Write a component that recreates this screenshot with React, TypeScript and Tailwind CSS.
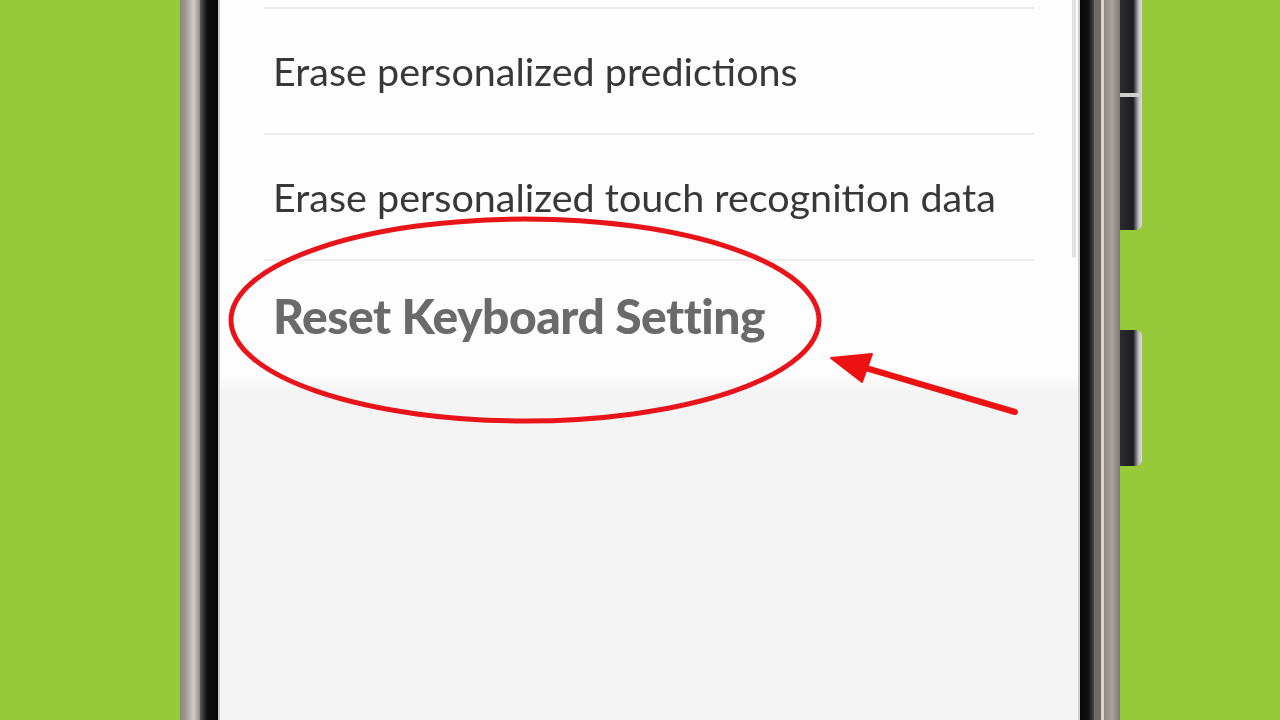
export default function App() {
  const rows = ["Erase personalized predictions", "Erase personalized touch recognition data"];

  return (
    <div className="w-[1280px] h-[720px] overflow-hidden flex bg-[#96ca3a]" style={{ fontFamily: "Lato, 'Noto Sans', sans-serif" }}>
      {/* green margin left */}
      <div className="w-[180px] shrink-0" />

      {/* left frame */}
      <div className="w-[40px] shrink-0 flex">
        <div className="w-[20px] bg-[linear-gradient(to_right,#8a8580,#a29c97_30%,#d2cdc8_70%,#8f8984)]" />
        <div className="w-[18px] bg-[linear-gradient(to_right,#5a5a5a,#0c0c0c_40%,#050505)]" />
        <div className="w-[2px] bg-[#c8c8c8]" />
      </div>

      {/* screen */}
      <div className="relative w-[858px] shrink-0 flex flex-col bg-[#f4f4f4]">
        <div className="bg-[#fdfdfd] pt-[7px] px-[44px] pb-[4px]">
          {rows.map((r) => (
            <div key={r}>
              <div className="h-[2px] bg-[#ebebeb]" />
              <div className="h-[124px] flex items-center pl-[9px] text-[39.5px] text-[#383838] blur-[0.5px]">{r}</div>
            </div>
          ))}
          <div className="h-[2px] bg-[#ededed]" />
          <div className="h-[110px] flex items-center pl-[9px] text-[48px] font-black text-[#6a6a6a] tracking-[-0.5px] blur-[0.3px]">
            Reset Keyboard Setting
          </div>
        </div>
        <div className="h-[16px] bg-[linear-gradient(to_bottom,#fdfdfd,#f4f4f4)]" />
        <div className="flex-1" />

        {/* scrollbar */}
        <div className="absolute right-[2px] top-0 w-[4px] h-[258px] rounded-b-full bg-[#e2e2e2]" />

        {/* annotation */}
        <svg className="absolute left-0 top-0" width="858" height="720" viewBox="221 0 858 720">
          <ellipse cx="526" cy="320" rx="294" ry="101" fill="none" stroke="#e8141a" strokeWidth="5" />
          <line x1="1016" y1="412" x2="860" y2="366" stroke="#ee1111" strokeWidth="6" strokeLinecap="round" />
          <polygon points="832,358 873,354 863,382" fill="#ee1111" stroke="#ee1111" strokeWidth="2" strokeLinejoin="round" />
        </svg>
      </div>

      {/* right frame */}
      <div className="w-[42px] shrink-0 flex">
        <div className="w-[2px] bg-[#d0d0d0]" />
        <div className="w-[14px] bg-[linear-gradient(to_right,#050505,#111_60%,#4a4a4a)]" />
        <div className="w-[7px] bg-[#6d6a67]" />
        <div className="w-[3px] bg-[#d8d4d0]" />
        <div className="w-[16px] bg-[linear-gradient(to_right,#8d8782,#a9a39e_50%,#7f7974)]" />
      </div>

      {/* side buttons */}
      <div className="w-[22px] shrink-0 flex flex-col">
        <div className="h-[93px] bg-[linear-gradient(to_right,#2a2c30,#1c1e22_60%,#bdbdbd_85%,#e0e0e0)]" />
        <div className="h-[4px] bg-[#cfcfcf]" />
        <div className="h-[133px] rounded-br-[6px] bg-[linear-gradient(to_right,#2a2c30,#1c1e22_60%,#bdbdbd_85%,#e0e0e0)]" />
        <div className="h-[100px]" />
        <div className="h-[136px] rounded-r-[6px] bg-[linear-gradient(to_right,#2a2c30,#1c1e22_60%,#bdbdbd_85%,#e0e0e0)]" />
      </div>
      <div className="flex-1" />
    </div>
  );
}
